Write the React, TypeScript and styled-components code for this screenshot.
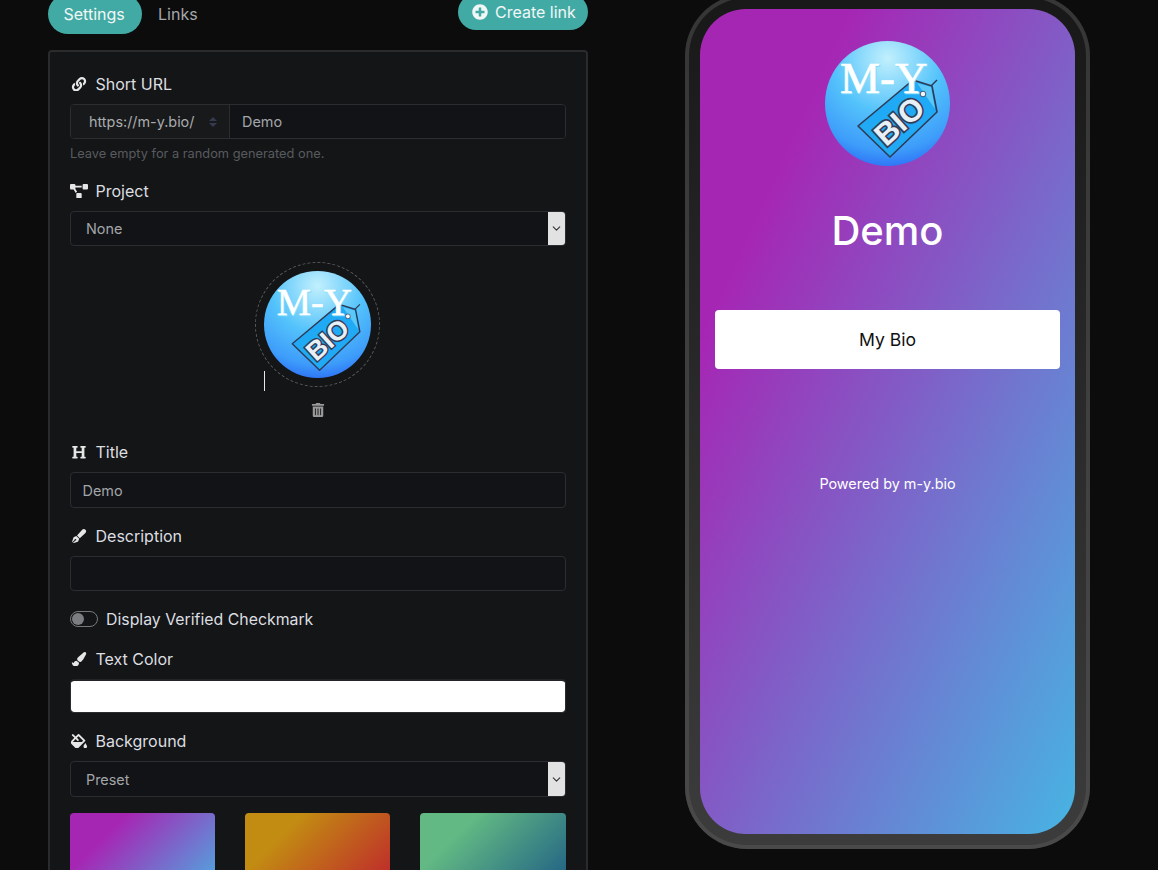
import React, { useId } from 'react';
import styled, { createGlobalStyle } from 'styled-components';
import {
  FaFillDrip,
  FaHeading,
  FaLink,
  FaPaintBrush,
  FaPenFancy,
  FaPlusCircle,
  FaProjectDiagram,
  FaTrashAlt,
} from 'react-icons/fa';
import { FiChevronDown } from 'react-icons/fi';

const GlobalStyle = createGlobalStyle`
  html, body {
    margin: 0;
    background: #0c0c0d;
    font-family: Inter, "Liberation Sans", sans-serif;
    overflow: hidden;
  }
  * { box-sizing: border-box; }
`;

const Viewport = styled.div`
  height: 870px;
  overflow: hidden;
`;

/* the page is scrolled a few pixels in the screenshot */
const Page = styled.div`
  display: grid;
  grid-template-columns: 540px 541px;
  column-gap: 29px;
  padding-left: 48px;
  margin-top: -6px;
`;

const TabRow = styled.div`
  display: flex;
  align-items: flex-start;
  margin-bottom: 16px;
`;

const Tab = styled.div<{ $active?: boolean }>`
  width: ${(p) => (p.$active ? '94px' : 'auto')};
  height: 40px;
  padding: 0 ${(p) => (p.$active ? '15.5px' : '16px')};
  margin-right: ${(p) => (p.$active ? '0' : 'auto')};
  border-radius: 20px;
  background: ${(p) => (p.$active ? '#42aaa4' : 'transparent')};
  color: ${(p) => (p.$active ? '#f1f7f6' : '#a4a7aa')};
  font-size: 16px;
  line-height: 40px;
  white-space: nowrap;
`;

const CreateButton = styled.div`
  display: flex;
  align-items: center;
  gap: 7px;
  width: 130px;
  height: 36px;
  padding: 0 12px 0 14px;
  border-radius: 18px;
  background: #42aaa4;
  color: #f1f7f6;
  font-size: 16px;
  white-space: nowrap;
`;

const Panel = styled.div`
  height: 900px;
  padding: 20px;
  background: #141517;
  border: 2px solid #2a2b2d;
  border-radius: 4px;
`;

const Label = styled.div`
  display: flex;
  align-items: center;
  height: 24px;
  margin-bottom: 8px;
  color: #dcdee0;
  font-size: 16px;

  svg {
    width: 18px;
    height: 14.4px;
    margin-right: 7.5px;
    color: #e6e6e6;
  }
`;

const Group = styled.div`
  margin-bottom: 16px;
`;

const UrlGroup = styled.div`
  display: flex;
  height: 35px;
  border: 1px solid #2b2d30;
  border-radius: 4px;
  overflow: hidden;
`;

const UrlPrefix = styled.div`
  display: flex;
  align-items: center;
  justify-content: space-between;
  width: 159px;
  padding: 0 12px 0 18px;
  background: #18191b;
  border-right: 1px solid #2b2d30;
  color: #a9acaf;
  font-size: 14.4px;
`;

const Stepper = styled.span`
  display: flex;
  flex-direction: column;
  gap: 2px;

  i {
    width: 0;
    height: 0;
    border-left: 4px solid transparent;
    border-right: 4px solid transparent;
  }
  i:first-child { border-bottom: 4px solid #353b4f; }
  i:last-child { border-top: 4px solid #353b4f; }
`;

const UrlInput = styled.input`
  flex: 1;
  min-width: 0;
  padding: 0 12px;
  border: 0;
  outline: 0;
  background: #121316;
  color: #a2a5a9;
  font: 14.4px Inter, "Liberation Sans", sans-serif;
`;

const Help = styled.div`
  height: 19px;
  margin-top: 5px;
  color: #585b5f;
  font-size: 12.8px;
  line-height: 19px;
`;

const TextInput = styled.input<{ $tall?: boolean }>`
  display: block;
  width: 100%;
  height: ${(p) => (p.$tall ? '36px' : '35px')};
  padding: 0 11.5px;
  background: #121316;
  border: 1px solid #2b2d30;
  border-radius: 4px;
  outline: 0;
  color: #a2a5a9;
  font: 14.4px Inter, "Liberation Sans", sans-serif;
`;

const ColorInput = styled.div`
  height: 34px;
  background: #fff;
  border: 1px solid #2b2d30;
  border-top: 2px solid #232427;
  border-radius: 4px;
  background-clip: padding-box;
`;

const SelectBox = styled.div<{ $tall?: boolean }>`
  display: flex;
  align-items: center;
  justify-content: space-between;
  height: ${(p) => (p.$tall ? '36px' : '35px')};
  padding-left: 15px;
  background: #121316;
  border: 1px solid #2b2d30;
  border-radius: 4px;
  color: #a2a5a9;
  font-size: 14.4px;
`;

const SelectArrow = styled.span`
  display: flex;
  align-items: center;
  justify-content: center;
  align-self: stretch;
  width: 17px;
  background: #e2e2e2;
  border-radius: 0 3px 3px 0;
  color: #333;
  font-size: 13px;
`;

const Uploader = styled.div`
  display: flex;
  flex-direction: column;
  align-items: center;
  margin-bottom: 23px;
`;

const Ring = styled.div`
  position: relative;
  width: 125px;
  height: 125px;
  margin-left: -1px;
  padding: 8px;
  border: 1px dashed #56585b;
  border-radius: 50%;
`;

const Caret = styled.span`
  position: absolute;
  left: 8px;
  top: 108px;
  width: 1px;
  height: 20px;
  background: #e8e8e8;
`;

const TrashButton = styled.div`
  display: flex;
  justify-content: center;
  margin-top: 16px;
  color: #9a9a9a;
  font-size: 14px;
  line-height: 0;
`;

const SwitchRow = styled.div`
  display: flex;
  align-items: center;
  gap: 8px;
  height: 24px;
  margin-bottom: 16px;
  color: #dcdee0;
  font-size: 15.85px;
`;

const Switch = styled.span`
  display: flex;
  align-items: center;
  width: 28px;
  height: 16px;
  padding: 1px;
  border: 1px solid #77797c;
  border-radius: 8px;

  &::before {
    content: '';
    width: 12px;
    height: 12px;
    border-radius: 50%;
    background: #7b7d80;
  }
`;

const Swatches = styled.div`
  display: grid;
  grid-template-columns: 145px 145px 146px;
  column-gap: 30px;
`;

const Swatch = styled.div<{ $bg: string }>`
  height: 145px;
  border-radius: 4px;
  background: ${(p) => p.$bg};
`;

const PhoneColumn = styled.div`
  display: flex;
  justify-content: center;
  align-items: flex-start;
`;

const Phone = styled.div`
  width: 405px;
  height: 855px;
  padding: 15px;
  border-radius: 62px;
  background: linear-gradient(180deg, #181818 0%, #2e2e2e 60%, #3c3c3c 100%);
  box-shadow: inset 0 0 0 4px rgba(90, 90, 90, 0.45);
`;

const Screen = styled.div`
  display: flex;
  flex-direction: column;
  align-items: center;
  height: 825px;
  padding: 32px 15px 0;
  border-radius: 46px;
  background: linear-gradient(to bottom right, #a626b4 20%, #47b4e3 100%);
  color: #fff;
`;

const ProfileName = styled.h1`
  margin: 39px 0 53px;
  font-size: 40px;
  font-weight: 500;
  line-height: 52px;
`;

const LinkButton = styled.div`
  width: 100%;
  height: 59px;
  border-radius: 4px;
  background: #fff;
  color: #111;
  font-size: 17.6px;
  line-height: 59px;
  text-align: center;
`;

const PoweredBy = styled.div`
  margin-top: 104px;
  font-size: 14.4px;
  line-height: 22px;
`;

const Logo: React.FC<{ size: number }> = ({ size }) => {
  const id = useId();
  return (
    <svg width={size} height={size} viewBox="0 0 125 125" style={{ display: 'block' }}>
      <defs>
        <radialGradient id={`${id}-bg`} cx="50%" cy="14%" r="90%">
          <stop offset="0%" stopColor="#c2f0fd" />
          <stop offset="48%" stopColor="#54c3fb" />
          <stop offset="82%" stopColor="#3d9cfa" />
          <stop offset="100%" stopColor="#2b6bf6" />
        </radialGradient>
      </defs>
      <circle cx="62.5" cy="62.5" r="62.5" fill={`url(#${id}-bg)`} />
      <path d="M98 53 L112 39" stroke="#2f3a55" strokeWidth="1.4" />
      <polygon
        points="33,85 88,39 107,45 112,71 65,116"
        fill="#20a9f5"
        stroke="#2f3a55"
        strokeWidth="1.6"
        strokeLinejoin="round"
      />
      <polygon points="92,42 106,46 110,68" fill="#5cc8f8" />
      <circle cx="98" cy="53" r="2.8" fill="#f2f6fa" stroke="#2f3a55" strokeWidth="0.8" />
      <text
        x="16"
        y="53"
        fontFamily="'Liberation Serif', serif"
        fontSize="45"
        fill="#7fdcf8"
        stroke="#7fdcf8"
        strokeWidth="0.6"
      >
        M-Y
      </text>
      <text
        x="15"
        y="51.5"
        fontFamily="'Liberation Serif', serif"
        fontSize="45"
        fill="#fff"
        stroke="#fff"
        strokeWidth="0.6"
      >
        M-Y
      </text>
      <text
        x="74"
        y="91"
        textAnchor="middle"
        transform="rotate(-42 74 80)"
        fontFamily="'Liberation Sans', sans-serif"
        fontWeight="700"
        fontSize="31"
        fill="#e8f0f7"
        stroke="#333c56"
        strokeWidth="3.4"
        paintOrder="stroke"
      >
        BIO
      </text>
    </svg>
  );
};

const App: React.FC = () => (
  <Viewport>
    <GlobalStyle />
    <Page>
      <div>
        <TabRow>
          <Tab $active>Settings</Tab>
          <Tab>Links</Tab>
          <CreateButton>
            <FaPlusCircle size={16} />
            Create link
          </CreateButton>
        </TabRow>
        <Panel>
          <Label>
            <FaLink />
            Short URL
          </Label>
          <UrlGroup>
            <UrlPrefix>
              https://m-y.bio/
              <Stepper>
                <i />
                <i />
              </Stepper>
            </UrlPrefix>
            <UrlInput readOnly value="Demo" />
          </UrlGroup>
          <Help>Leave empty for a random generated one.</Help>
          <Group />
          <Label>
            <FaProjectDiagram />
            Project
          </Label>
          <Group>
            <SelectBox>
              None
              <SelectArrow>
                <FiChevronDown />
              </SelectArrow>
            </SelectBox>
          </Group>
          <Uploader>
            <Ring>
              <Logo size={107} />
              <Caret />
            </Ring>
            <TrashButton>
              <FaTrashAlt />
            </TrashButton>
          </Uploader>
          <Label>
            <FaHeading />
            Title
          </Label>
          <Group>
            <TextInput $tall readOnly value="Demo" />
          </Group>
          <Label>
            <FaPenFancy />
            Description
          </Label>
          <Group>
            <TextInput readOnly value="" />
          </Group>
          <SwitchRow>
            <Switch />
            Display Verified Checkmark
          </SwitchRow>
          <Label>
            <FaPaintBrush />
            Text Color
          </Label>
          <Group>
            <ColorInput />
          </Group>
          <Label>
            <FaFillDrip />
            Background
          </Label>
          <Group>
            <SelectBox $tall>
              Preset
              <SelectArrow>
                <FiChevronDown />
              </SelectArrow>
            </SelectBox>
          </Group>
          <Swatches>
            <Swatch $bg="linear-gradient(to bottom right, #a626b4 20%, #47b4e3 80%)" />
            <Swatch $bg="linear-gradient(to bottom right, #c28c12 20%, #bf2f2a 70%)" />
            <Swatch $bg="linear-gradient(to bottom right, #62b983 20%, #1f5f85 75%)" />
          </Swatches>
        </Panel>
      </div>
      <PhoneColumn>
        <Phone>
          <Screen>
            <Logo size={125} />
            <ProfileName>Demo</ProfileName>
            <LinkButton>My Bio</LinkButton>
            <PoweredBy>Powered by m-y.bio</PoweredBy>
          </Screen>
        </Phone>
      </PhoneColumn>
    </Page>
  </Viewport>
);

export default App;
